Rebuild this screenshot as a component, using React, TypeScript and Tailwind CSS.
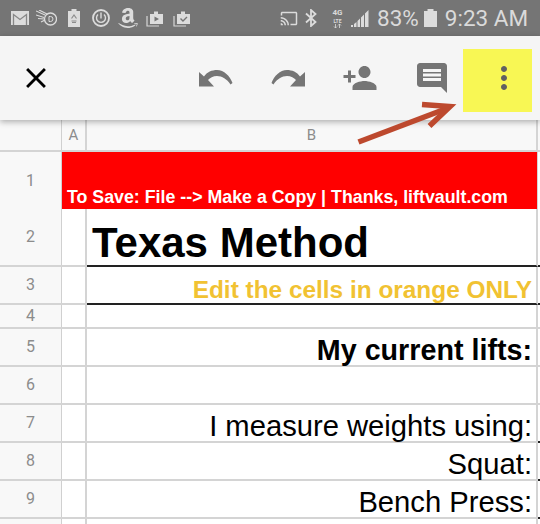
import React from 'react';
import { FaAmazon } from 'react-icons/fa';
import { MdCast, MdClose, MdComment, MdMoreVert, MdPersonAdd } from 'react-icons/md';

const StatusIcon: React.FC<{ w: number; gap: number; children: React.ReactNode }> = ({ w, gap, children }) => (
  <span className="flex shrink-0 items-center justify-center" style={{ width: w, marginLeft: gap }}>
    {children}
  </span>
);

const StackIcon: React.FC<{ check?: boolean }> = ({ check }) => (
  <svg width="18" height="18" viewBox="0 0 18 18">
    <path d="M1 7v10h12" fill="none" stroke="#d6d6d6" strokeWidth="1.2" />
    <path d="M4 5h4V2.5h4V5h5v10H4z" fill="#dcdcdc" />
    {check ? (
      <path d="M7.5 9.5l2.5 2.5 4-4" fill="none" stroke="#757575" strokeWidth="1.4" />
    ) : (
      <path d="M8.5 7.5v5l4.5-2.5z" fill="#757575" />
    )}
  </svg>
);

const StatusBar = () => (
  <div className="flex h-[36px] items-center bg-[#757575] font-['Roboto',sans-serif] text-[#dadada]">
    <StatusIcon w={18} gap={11}>
      <svg width="18" height="14" viewBox="0 0 18 14">
        <path d="M0 0h18v14H0z" fill="#dcdcdc" />
        <path d="M2.5 14V3.5L9 8.5l6.5-5V14" fill="none" stroke="#888888" strokeWidth="1.3" />
      </svg>
    </StatusIcon>
    <StatusIcon w={21} gap={7}>
      <svg width="21" height="16" viewBox="0 0 21 16">
        <path d="M0 1l9 4M3 0l8 4M0 5l8 2.500M2 8.500l6 .5M5 12l4-2" fill="none" stroke="#dcdcdc" strokeWidth="1.1" />
        <circle cx="14.500" cy="9" r="6" fill="none" stroke="#dcdcdc" strokeWidth="1.3" />
        <path d="M13 6.500h1.500a2.500 2.500 0 0 1 0 5H13z" fill="none" stroke="#dcdcdc" strokeWidth="1" />
      </svg>
    </StatusIcon>
    <StatusIcon w={12} gap={11}>
      <svg width="12" height="18" viewBox="0 0 12 18">
        <path d="M0 2h3.500V0h5v2H12v16H0z" fill="#dcdcdc" />
        <path d="M3.500 9.500L6 6l2.500 3.500M3.500 12h5M4 13.500h4" fill="none" stroke="#8c8c8c" strokeWidth="1.2" />
      </svg>
    </StatusIcon>
    <StatusIcon w={18} gap={12}>
      <svg width="18" height="18" viewBox="0 0 18 18">
        <circle cx="9" cy="9" r="8" fill="none" stroke="#dcdcdc" strokeWidth="1.800" />
        <path d="M6 5.500a4.500 4.500 0 1 0 6 0M9 3.500v6" fill="none" stroke="#dcdcdc" strokeWidth="1.400" />
      </svg>
    </StatusIcon>
    <StatusIcon w={20} gap={8}>
      <FaAmazon size={24} color="#dcdcdc" />
    </StatusIcon>
    <StatusIcon w={18} gap={8}>
      <StackIcon />
    </StatusIcon>
    <StatusIcon w={18} gap={9}>
      <StackIcon check />
    </StatusIcon>
    <StatusIcon w={18} gap={89}>
      <MdCast size={19} color="#dcdcdc" />
    </StatusIcon>
    <StatusIcon w={12} gap={7}>
      <svg width="12" height="18" viewBox="0 0 12 18">
        <path d="M1 4.500L10.500 13 6 17V1l4.500 4L1 13.500" fill="none" stroke="#dcdcdc" strokeWidth="1.800" />
      </svg>
    </StatusIcon>
    <StatusIcon w={11} gap={15}>
      <span className="flex flex-col items-center text-[8px] leading-[10px] font-bold">
        <span>4G</span>
        <span className="text-[5px] leading-[6px]">LTE</span>
        <svg width="9" height="4" viewBox="0 0 9 4">
          <path d="M2.500 0v4M1 2.500L2.500 4 4 2.500M6.500 4V0M5 1.500L6.500 0 8 1.500" fill="none" stroke="#dcdcdc" strokeWidth="0.800" />
        </svg>
      </span>
    </StatusIcon>
    <StatusIcon w={18} gap={8}>
      <svg width="18" height="18" viewBox="0 0 18 18">
        <path d="M0 18h2v-2H0zM3 18h2.500v-5L3 15zM6.500 18H9v-8.500L6.500 12zM10 18h3V5.500L10 8.500zM14 18h3.500V1L14 4.500z" fill="#dcdcdc" />
      </svg>
    </StatusIcon>
    <span className="ml-[8px] text-[22.500px] leading-none">83%</span>
    <StatusIcon w={13} gap={5}>
      <svg width="13" height="18" viewBox="0 0 13 18">
        <path d="M0 2h3.500V0h6v2H13v16H0z" fill="#dcdcdc" />
      </svg>
    </StatusIcon>
    <span className="ml-[8px] text-[22.500px] leading-none">9:23 AM</span>
  </div>
);

const ToolButton: React.FC<{ children: React.ReactNode }> = ({ children }) => (
  <div className="flex h-full w-[72px] items-center justify-center">{children}</div>
);

const UndoIcon: React.FC<{ flip?: boolean }> = ({ flip }) => (
  <svg className={flip ? '-scale-x-100' : ''} width="34" height="17" viewBox="0 0 34 17">
    <path
      d="M0 2L5 6.500C8 2 13 0 18 0C25 0 31 6 33.500 13L31.500 14.500C28 9 23 6 18 6C14 6 11 8 9 10L15 16.500H0Z"
      fill="#757575"
    />
  </svg>
);

const Toolbar = () => (
  <div className="relative z-10 flex h-[84px] items-center bg-[#f5f5f5] shadow-[0_2px_6px_rgba(0,0,0,0.3)]">
    <ToolButton>
      <MdClose size={34} color="#000000" />
    </ToolButton>
    <div className="ml-auto flex h-full">
      <ToolButton>
        <UndoIcon />
      </ToolButton>
      <ToolButton>
        <UndoIcon flip />
      </ToolButton>
      <ToolButton>
        <MdPersonAdd size={36} color="#757575" />
      </ToolButton>
      <ToolButton>
        <MdComment size={36} color="#757575" />
      </ToolButton>
      <ToolButton>
        <MdMoreVert size={36} color="#616161" />
      </ToolButton>
    </div>
    {/* highlight and arrow drawn on top of the screenshot */}
    <div className="absolute top-[13px] left-[463px] -z-10 h-[63px] w-[69px] bg-[#f8f754]" />
    <svg className="absolute top-[62px] left-[350px] z-20" width="110" height="50" viewBox="0 0 110 50">
      <path d="M8.500 44L98 10" fill="none" stroke="#bd492e" strokeWidth="5.500" />
      <path d="M72 6.500L100 8.500L79.500 28" fill="none" stroke="#bd492e" strokeWidth="5.500" />
    </svg>
  </div>
);

type RowData = {
  n: number;
  h: number;
  cell?: React.ReactNode;
  black?: boolean;
  tick?: boolean;
};

const rows: RowData[] = [
  { n: 2, h: 58, black: true, cell: <span className="pt-[10px] pl-[5px] text-[42px] font-bold text-black">Texas Method</span> },
  {
    n: 3,
    h: 38,
    black: true,
    cell: <span className="ml-auto pt-[10px] pr-[4px] text-[24.400px] font-bold text-[#f1c232]">Edit the cells in orange ONLY</span>,
  },
  { n: 4, h: 24 },
  { n: 5, h: 38, cell: <span className="ml-auto pt-[8px] pr-[4px] text-[28.700px] font-bold text-black">My current lifts:</span> },
  { n: 6, h: 38 },
  { n: 7, h: 38, tick: true, cell: <span className="ml-auto pt-[8px] pr-[4px] text-[29.200px] text-black">I measure weights using:</span> },
  { n: 8, h: 38, tick: true, cell: <span className="ml-auto pt-[8px] pr-[4px] text-[29.200px] text-black">Squat:</span> },
  { n: 9, h: 38, tick: true, cell: <span className="ml-auto pt-[8px] pr-[4px] text-[29.200px] text-black">Bench Press:</span> },
  { n: 10, h: 38 },
];

const RowHead: React.FC<{ n?: number }> = ({ n }) => (
  <div className="flex w-[62px] shrink-0 items-center justify-center border-r border-r-[#d0d0d0] bg-[#f8f8f8] font-['Roboto',sans-serif] text-[16px] text-[#8c8c8c]">
    {n === 10 ? '' : n}
  </div>
);

const Sheet = () => (
  <div className="font-['Liberation_Sans',sans-serif]">
    <div className="flex h-[32px] border-b-2 border-b-[#d4d4d4] bg-[#f8f8f8] font-['Roboto',sans-serif] text-[15px] text-[#8c8c8c]">
      <div className="w-[62px] shrink-0 border-r border-r-[#d0d0d0]" />
      <div className="flex w-[25px] shrink-0 items-center justify-center border-r-2 border-r-[#d4d4d4]">A</div>
      <div className="flex w-[451px] shrink-0 items-center justify-center border-r-2 border-r-[#d4d4d4]">B</div>
    </div>
    <div className="flex h-[57px] bg-white">
      <RowHead n={1} />
      <div className="flex w-[475px] shrink-0 items-end bg-[#ff0000] pb-[1px] pl-[5px] text-[17.800px] leading-[22px] font-bold whitespace-nowrap text-white">
        To Save: File --&gt; Make a Copy | Thanks, liftvault.com
      </div>
      <div className="w-px bg-[#d4d4d4]" />
    </div>
    {rows.map((row) => (
      <div key={row.n} className="flex bg-white" style={{ height: row.h }}>
        <div className="flex w-[62px] shrink-0 border-b-2 border-b-[#d4d4d4]">
          <RowHead n={row.n} />
        </div>
        <div className="w-[25px] shrink-0 border-r-2 border-b-2 border-r-[#d4d4d4] border-b-[#d4d4d4]" />
        <div
          className={
            row.black
              ? 'flex w-[451px] shrink-0 items-center border-r-2 border-b-2 border-r-[#d4d4d4] border-b-[#222222] whitespace-nowrap'
              : 'flex w-[451px] shrink-0 items-center border-r-2 border-b-2 border-r-[#d4d4d4] border-b-[#d4d4d4] whitespace-nowrap'
          }
        >
          {row.cell}
        </div>
        <div
          className={
            row.black || row.tick
              ? 'flex-1 border-b-2 border-b-[#222222]'
              : 'flex-1 border-b-2 border-b-[#d4d4d4]'
          }
        />
      </div>
    ))}
  </div>
);

export default function App() {
  return (
    <div className="h-[524px] w-[540px] overflow-hidden bg-white">
      <StatusBar />
      <Toolbar />
      <Sheet />
    </div>
  );
}
